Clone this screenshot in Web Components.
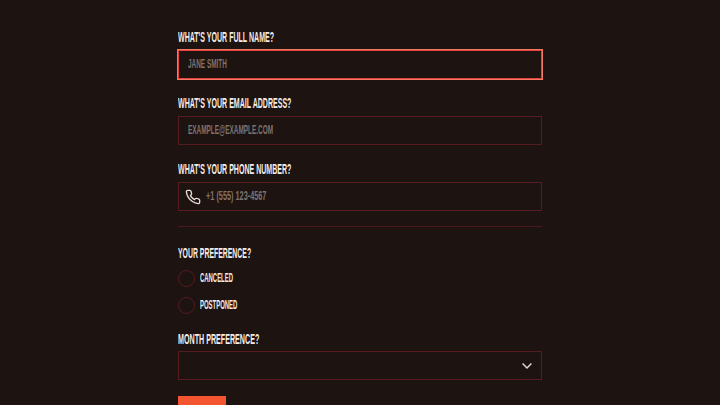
<!DOCTYPE html>
<html>
<head>
<meta charset="utf-8">
<style>
  html, body { margin: 0; height: 405px; overflow: hidden; background: #1d1310; }
  body { font-family: "Liberation Sans", Arial, sans-serif; font-weight: 700; }
</style>
</head>
<body>
<booking-form></booking-form>

<script>
// no condensed font installed, so the text is squeezed with scaleX
const LABEL_CSS = `
  .lbl { display: block; height: 16px; line-height: 16px; font-size: 14.5px; color: #f3ece8; text-transform: uppercase; white-space: nowrap; transform-origin: left center; }
`;

class FieldInput extends HTMLElement {
  constructor() {
    super();
    this.attachShadow({mode: "open"});
  }
  connectedCallback() {
    const label = this.getAttribute('label') || '';
    const placeholder = this.getAttribute('placeholder') || '';
    const labelScale = this.getAttribute('label-scale') || '.486';
    const textScale = this.getAttribute('text-scale') || '.535';
    this.shadowRoot.innerHTML = /* html */ `
      <style>
        ${LABEL_CSS}
        :host { display: block; margin-bottom: 16px; }
        .box { display: flex; align-items: center; gap: 5px; height: 27px; margin-top: 5px; padding: 0 9px; border: 1px solid #571a20; }
        :host([focused]) .box { border-color: #e8403a; box-shadow: 0 0 0 1px #f47a66; }
        .ph { padding-bottom: 2px; font-size: 12px; color: #7d726d; text-transform: uppercase; white-space: nowrap; transform-origin: left center; transform: scaleX(${textScale}); }
        ::slotted(svg) { display: block; flex: none; margin-left: -3px; }
      </style>
      <span class="lbl" style="transform: scaleX(${labelScale})">${label}</span>
      <div class="box"><slot></slot><span class="ph">${placeholder}</span></div>
    `;
  }
}

class RadioOption extends HTMLElement {
  constructor() {
    super();
    this.attachShadow({mode: "open"});
  }
  connectedCallback() {
    this.shadowRoot.innerHTML = /* html */ `
      <style>
        :host { display: flex; align-items: center; gap: 5px; height: 17px; margin-bottom: 10px; font-size: 12.5px; color: #f3ece8; text-transform: uppercase; }
        .dot { box-sizing: border-box; flex: none; width: 17px; height: 17px; border: 1px solid #571a20; border-radius: 50%; }
        .txt { padding-bottom: 2px; white-space: nowrap; transform-origin: left center; transform: scaleX(.475); }
      </style>
      <span class="dot"></span><span class="txt"><slot></slot></span>
    `;
  }
}

class FieldSelect extends HTMLElement {
  constructor() {
    super();
    this.attachShadow({mode: "open"});
  }
  connectedCallback() {
    this.shadowRoot.innerHTML = /* html */ `
      <style>
        ${LABEL_CSS}
        :host { display: block; margin-top: 17px; }
        .box { display: flex; align-items: center; justify-content: flex-end; height: 27px; margin-top: 4px; padding: 0 9px; border: 1px solid #571a20; }
        svg { display: block; }
      </style>
      <span class="lbl" style="transform: scaleX(.492)">${this.getAttribute('label') || ''}</span>
      <div class="box">
        <svg width="10" height="6" viewBox="0 0 10 6" fill="none" stroke="#e8dcd6" stroke-width="1.4"><path d="M.6.6 5 5 9.4.6"/></svg>
      </div>
    `;
  }
}

class BookingForm extends HTMLElement {
  constructor() {
    super();
    this.attachShadow({mode: "open"});
  }
  connectedCallback() {
    this.shadowRoot.innerHTML = /* html */ `
      <style>
        ${LABEL_CSS}
        :host { display: block; box-sizing: border-box; width: 368px; height: 405px; overflow: hidden; margin: 0 auto; padding: 29px 2px 0; }
        hr { height: 1px; border: 0; margin: -1px 0 18px; background: #4a171b; }
        .pref { margin-bottom: 9px; transform: scaleX(.475); }
        radio-option + radio-option { margin-bottom: 0; }
        .submit { display: block; width: 48px; height: 30px; margin-top: 16px; border: 0; padding: 0; background: #f2552f; }
      </style>
      <field-input label="What's your full name?" placeholder="Jane Smith" focused></field-input>
      <field-input label="What's your email address?" placeholder="example@example.com"></field-input>
      <field-input label="What's your phone number?" placeholder="+1 (555) 123-4567" text-scale=".61">
        <svg width="16" height="16" viewBox="0 0 24 24" fill="none" stroke="#e8dcd6" stroke-width="2" stroke-linecap="round" stroke-linejoin="round"><path d="M22 16.9v3a2 2 0 0 1-2.2 2 19.8 19.8 0 0 1-8.6-3.1 19.5 19.5 0 0 1-6-6A19.8 19.8 0 0 1 2.1 4.2 2 2 0 0 1 4.1 2h3a2 2 0 0 1 2 1.7c.1 1 .4 1.9.7 2.8a2 2 0 0 1-.5 2.1L8.1 9.9a16 16 0 0 0 6 6l1.3-1.3a2 2 0 0 1 2.1-.4c.9.3 1.8.6 2.8.7a2 2 0 0 1 1.7 2z"/></svg>
      </field-input>
      <hr>
      <span class="lbl pref">Your preference?</span>
      <radio-option>Canceled</radio-option>
      <radio-option>Postponed</radio-option>
      <field-select label="Month preference?"></field-select>
      <button class="submit" aria-label="Submit"></button>
    `;
  }
}

customElements.define('field-input', FieldInput);
customElements.define('radio-option', RadioOption);
customElements.define('field-select', FieldSelect);
customElements.define('booking-form', BookingForm);
</script>
</body>
</html>
